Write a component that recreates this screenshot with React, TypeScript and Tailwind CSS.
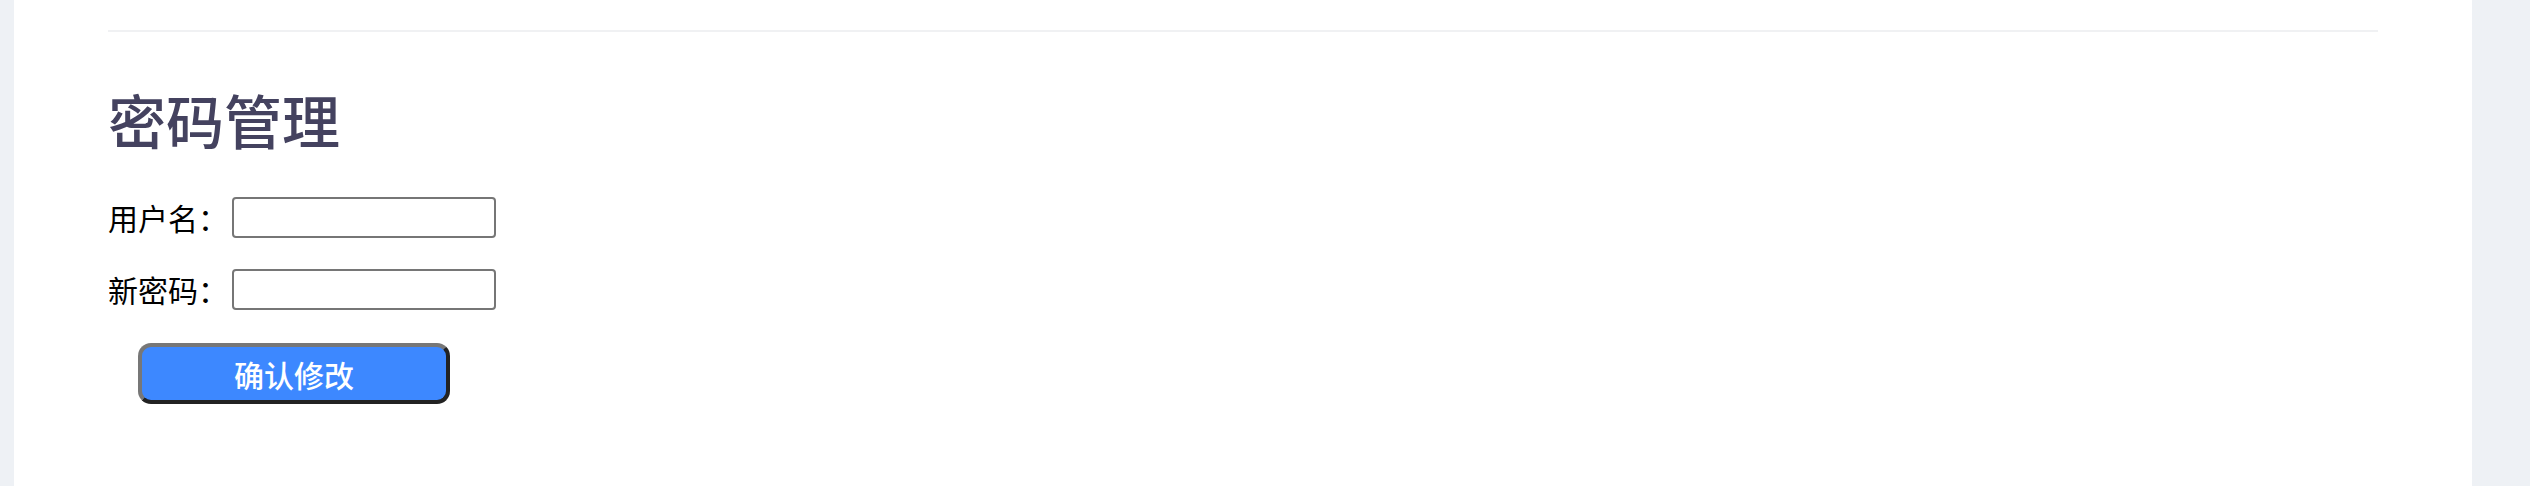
import React from "react";

export default function App() {
  return (
    <div
      className="flex w-[2530px] h-[486px] bg-[#eef1f5]"
      style={{ fontFamily: '"Noto Sans CJK SC", "Noto Sans", sans-serif' }}
    >
      <div className="ml-[14px] w-[2458px] h-full bg-white px-[94px] pt-[30px]">
        <div className="h-[2px] bg-[#f0f1f3]" />
        <h1 className="mt-[53px] text-[58px] leading-[68px] text-[#44425f] font-medium tracking-[0px]">
          密码管理
        </h1>
        <div className="mt-[44px] flex flex-col">
          <div className="flex items-center h-[41px]">
            <span className="text-[30px] leading-[41px] text-black w-[124px]">用户名：</span>
            <input
              type="text"
              className="w-[264px] h-[41px] border-2 border-[#767676] rounded-[4px] bg-white outline-none"
            />
          </div>
          <div className="flex items-center h-[41px] mt-[31px]">
            <span className="text-[30px] leading-[41px] text-black w-[124px]">新密码：</span>
            <input
              type="password"
              className="w-[264px] h-[41px] border-2 border-[#767676] rounded-[4px] bg-white outline-none"
            />
          </div>
          <div className="mt-[33px] pl-[30px]">
            <button
              type="button"
              className="w-[312px] h-[61px] rounded-[13px] bg-[#3d88ff] text-white text-[30px] font-medium leading-none border-[4px] border-t-[#777777] border-l-[#777777] border-b-[#222222] border-r-[#222222] flex items-center justify-center"
            >
              确认修改
            </button>
          </div>
        </div>
      </div>
    </div>
  );
}
